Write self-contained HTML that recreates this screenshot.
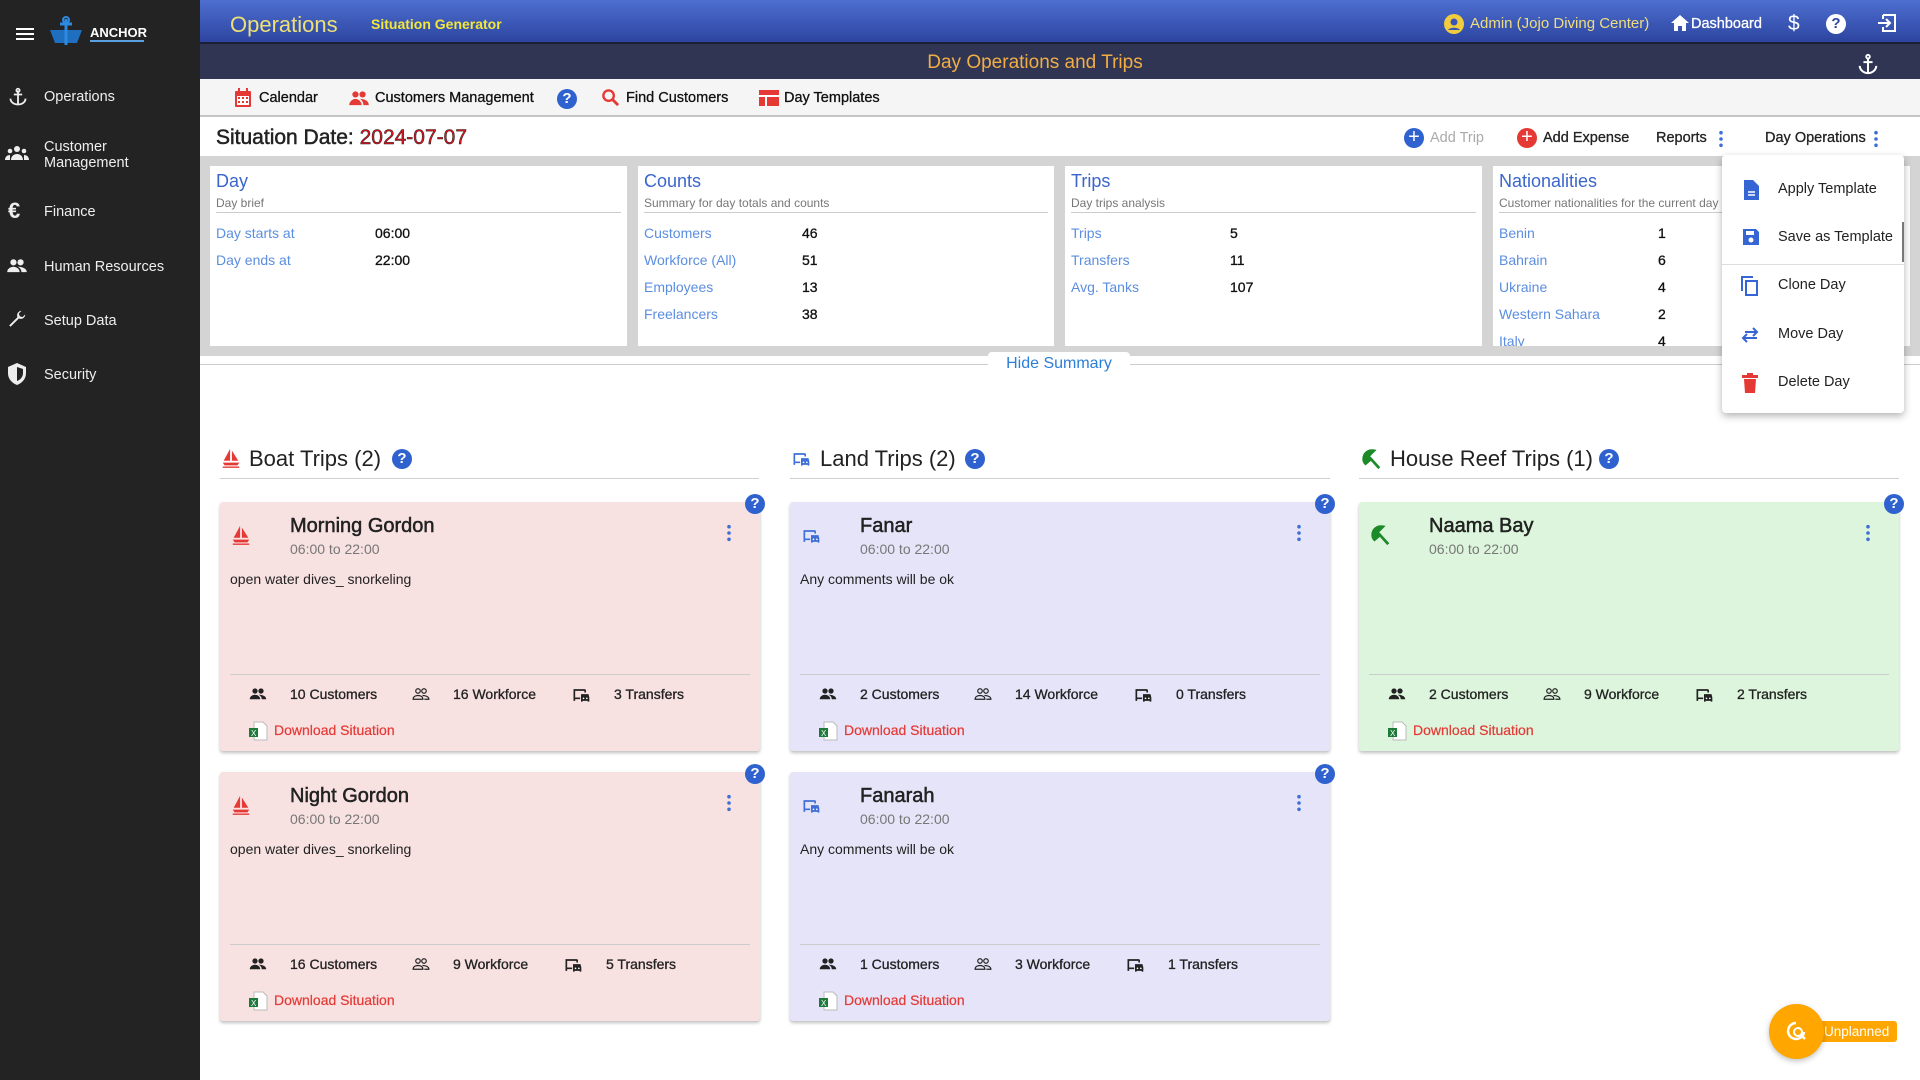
<!DOCTYPE html>
<html><head><meta charset="utf-8">
<style>
*{box-sizing:border-box;margin:0;padding:0}
body{width:1920px;height:1080px;overflow:hidden;font-family:"Liberation Sans",Arial,sans-serif;background:#fff;position:relative;color:#222}
.a{position:absolute;white-space:nowrap}
#side{left:0;top:0;width:200px;height:1080px;background:#232323}
.si{color:#eee;font-size:14.5px;left:44px}
#top{left:200px;top:0;width:1720px;height:44px;background:linear-gradient(#4d6fd0,#2d45a0);border-bottom:2px solid #1a1f33}
#sub{left:200px;top:44px;width:1720px;height:35px;background:#2f3553}
#tabs{left:200px;top:79px;width:1720px;height:38px;background:#f5f5f5;border-bottom:2px solid #c4c4c4}
.tab{font-size:14.5px;color:#111;top:90px;-webkit-text-stroke:0.3px #111}
#sumbg{left:200px;top:156px;width:1720px;height:200px;background:#d4d4d4}
.card{background:#fff;top:166px;height:180px;overflow:hidden}
.ct{font-size:18px;color:#3a66cc;left:6px;top:5px}
.cs{font-size:12px;color:#777;left:6px;top:30px}
.chr{left:6px;right:6px;top:46px;height:1px;background:#ccc}
.rl{font-size:14px;color:#5b8ee0;left:6px}
.rv{font-size:14px;color:#111;-webkit-text-stroke:0.3px #111}
.sh{font-size:22px;color:#222;top:446px}
.ul{top:478px;height:1px;background:#d0d0d0}
.q{width:20px;height:20px;border-radius:50%;background:#2f62cf;color:#fff;font-weight:bold;font-size:15px;text-align:center;line-height:20px}
.tc{position:absolute;border-radius:3px;box-shadow:0 2px 3px rgba(0,0,0,.25);width:540px;height:249px}
.tc .t{position:absolute;left:70px;top:13px;font-size:20px;color:#222;-webkit-text-stroke:0.5px #222}
.tc .tm{position:absolute;left:70px;top:39px;font-size:14px;color:#777}
.tc .cm{position:absolute;left:10px;top:69px;font-size:14px;color:#222}
.tc .hr{position:absolute;left:10px;right:10px;top:172px;height:1px;background:#ccc}
.tc .st{position:absolute;top:184px;font-size:14px;color:#222;-webkit-text-stroke:0.3px #222}
.tc .dl{position:absolute;left:54px;top:220px;font-size:14px;color:#e53935;-webkit-text-stroke:0.2px #e53935}
.tc .ic{position:absolute}
.tc .qq{position:absolute;right:-5px;top:-8px}
.tc .kb{position:absolute;right:28px;top:22px}
.mi{font-size:14.5px;color:#222;left:56px}
</style></head><body>
<svg width="0" height="0" style="position:absolute">
<defs>
<symbol id="boat" viewBox="0 0 24 24"><path d="M11 2L4 15h7zM13 4v11h7z M3 17h18l-2 3H5z" fill="#e53935"/><path d="M3 22h18" stroke="#e53935" stroke-width="1.5"/></symbol>
<symbol id="bus" viewBox="0 0 24 24"><path d="M3 5h13a2 2 0 0 1 2 2v2h-2V7H5v8h6v2H5v2H3zM12 11h9l1 4v5h-2v-1h-6v1h-2v-5z" fill="#3f6fd6"/><circle cx="15" cy="16" r="1" fill="#fff"/><circle cx="19" cy="16" r="1" fill="#fff"/></symbol>
<symbol id="busk" viewBox="0 0 24 24"><path d="M3 5h13a2 2 0 0 1 2 2v2h-2V7H5v8h6v2H5v2H3zM12 11h9l1 4v5h-2v-1h-6v1h-2v-5z" fill="#222"/><circle cx="15" cy="16" r="1" fill="#fff"/><circle cx="19" cy="16" r="1" fill="#fff"/></symbol>
<symbol id="umb" viewBox="0 0 24 24"><path d="M4 12C4 6 9 2 15 3L9 9l3 3-6 5C5 16 4 14 4 12zM12 12l9 10" stroke="#1d8a2a" stroke-width="3" fill="#1d8a2a"/></symbol>
<symbol id="ppl" viewBox="0 0 24 24"><circle cx="8" cy="8" r="3.5" fill="#222"/><circle cx="16" cy="8" r="3.5" fill="#222"/><path d="M1 19c0-4 4-6 7-6s7 2 7 6zM13 13c3 0 10 1 10 6h-6c0-3-2-5-4-6z" fill="#222"/></symbol>
<symbol id="ppo" viewBox="0 0 24 24"><g fill="none" stroke="#222" stroke-width="1.6"><circle cx="8" cy="8" r="3"/><circle cx="16" cy="8" r="3"/><path d="M1.5 19c0-4 4-5 6.5-5s6.5 1 6.5 5zM14 14c3 0 8.5 1 8.5 5h-6"/></g></symbol>
<symbol id="xl" viewBox="0 0 20 20"><path d="M6 1h9l4 4v14H6z" fill="#fff" stroke="#bbb"/><rect x="1" y="7" width="9" height="9" fill="#1f7a3a"/><text x="3" y="15" font-size="8" fill="#fff" font-family="Liberation Sans">X</text></symbol>
<symbol id="kb" viewBox="0 0 6 20"><circle cx="3" cy="3" r="2" fill="#3f6fd6"/><circle cx="3" cy="10" r="2" fill="#3f6fd6"/><circle cx="3" cy="17" r="2" fill="#3f6fd6"/></symbol>
</defs></svg>

<div id="side" class="a"></div>
<div class="a" style="left:16px;top:28px;width:18px;height:2px;background:#fff;box-shadow:0 5px #fff,0 10px #fff"></div>
<svg class="a" style="left:48px;top:16px" width="36" height="34" viewBox="0 0 36 34"><path d="M2 14h32l-5 13H7z" fill="#1e6fbf"/><path d="M18 3v26M12 8h12" stroke="#2d8ae0" stroke-width="3"/><circle cx="18" cy="4" r="3" fill="none" stroke="#2d8ae0" stroke-width="2"/></svg>
<div class="a" style="left:90px;top:25px;color:#fff;font-weight:bold;font-size:13px">ANCHOR</div>
<div class="a" style="left:90px;top:40px;width:54px;height:2px;background:#5aa0e0"></div>
<svg class="a" style="left:8px;top:86px" width="20" height="22" viewBox="0 0 24 24"><path d="M12 4v17M7 9h10M3 14c0 4 4 7 9 7s9-3 9-7" fill="none" stroke="#eee" stroke-width="2.2"/><circle cx="12" cy="4" r="2" fill="none" stroke="#eee" stroke-width="2"/></svg>
<div class="a si" style="top:89px">Operations</div>
<svg class="a" style="left:5px;top:145px" width="24" height="16" viewBox="0 0 24 16"><circle cx="12" cy="4" r="3" fill="#eee"/><circle cx="5" cy="6" r="2.3" fill="#eee"/><circle cx="19" cy="6" r="2.3" fill="#eee"/><path d="M6 15c0-4 3-6 6-6s6 2 6 6zM0 15c0-3 2-5 5-5v5zM24 15c0-3-2-5-5-5v5z" fill="#eee"/></svg>
<div class="a si" style="top:139px;line-height:16px">Customer<br>Management</div>
<div class="a" style="left:8px;top:198px;color:#eee;font-size:22px;font-weight:bold">€</div>
<div class="a si" style="top:204px">Finance</div>
<svg class="a" style="left:6px;top:257px" width="22" height="16" viewBox="0 0 24 18"><circle cx="8" cy="6" r="3.5" fill="#eee"/><circle cx="16" cy="6" r="3.5" fill="#eee"/><path d="M1 17c0-4 4-6 7-6s7 2 7 6zM13 11c3 0 10 1 10 6h-6c0-3-2-5-4-6z" fill="#eee"/></svg>
<div class="a si" style="top:259px">Human Resources</div>
<svg class="a" style="left:6px;top:308px" width="22" height="22" viewBox="0 0 24 24"><path d="M21 7a5 5 0 0 1-7 4.5L5 20.5 3.5 19l9-9A5 5 0 0 1 17 3l-3 3 1 3 3 1z" fill="#eee"/></svg>
<div class="a si" style="top:313px">Setup Data</div>
<svg class="a" style="left:7px;top:362px" width="20" height="24" viewBox="0 0 20 24"><path d="M10 1l9 4v6c0 6-4 10-9 12-5-2-9-6-9-12V5z" fill="#eee"/><path d="M10 5v14c3-1 6-4 6-8V7z" fill="#232323"/></svg>
<div class="a si" style="top:367px">Security</div>

<div id="top" class="a"></div>
<div class="a" style="left:230px;top:12px;font-size:22px;color:#ece077">Operations</div>
<div class="a" style="left:371px;top:16px;font-size:14px;font-weight:bold;color:#f3e83a">Situation Generator</div>
<svg class="a" style="left:1444px;top:14px" width="20" height="20" viewBox="0 0 20 20"><circle cx="10" cy="10" r="10" fill="#f0cd3c"/><circle cx="10" cy="8" r="3.5" fill="#3a55b5"/><path d="M4 16c2-3 10-3 12 0" fill="#3a55b5"/></svg>
<div class="a" style="left:1470px;top:15px;font-size:15px;color:#efdd80">Admin (Jojo Diving Center)</div>
<svg class="a" style="left:1670px;top:14px" width="20" height="18" viewBox="0 0 20 18"><path d="M10 1L1 9h3v8h4v-5h4v5h4V9h3z" fill="#fff"/></svg>
<div class="a" style="left:1691px;top:16px;font-size:14.5px;color:#fff;-webkit-text-stroke:0.3px #fff">Dashboard</div>
<div class="a" style="left:1788px;top:12px;font-size:21px;color:#fff">$</div>
<div class="a" style="left:1826px;top:14px;width:20px;height:20px;border-radius:50%;background:#fff;color:#2d45a0;text-align:center;font-weight:bold;font-size:15px;line-height:20px">?</div>
<svg class="a" style="left:1877px;top:14px" width="20" height="18" viewBox="0 0 20 18"><path d="M6 1h12v16H6v-4M6 5V1M1 9h11M9 5l4 4-4 4" fill="none" stroke="#fff" stroke-width="2"/></svg>

<div id="sub" class="a"></div>
<div class="a" style="left:0;width:2070px;text-align:center;top:52px;font-size:19px;color:#f2ad45">Day Operations and Trips</div>
<svg class="a" style="left:1857px;top:52px" width="22" height="24" viewBox="0 0 24 24"><path d="M12 6v16M7 10h10M3 14c0 4 4 8 9 8s9-4 9-8" fill="none" stroke="#fff" stroke-width="2.2"/><circle cx="12" cy="4" r="2" fill="none" stroke="#fff" stroke-width="2"/></svg>

<div id="tabs" class="a"></div>
<svg class="a" style="left:234px;top:88px" width="18" height="20" viewBox="0 0 18 20"><rect x="1" y="3" width="16" height="16" rx="1" fill="#e53935"/><rect x="3" y="8" width="12" height="9" fill="#fff"/><g fill="#e53935"><rect x="4" y="9" width="2" height="2"/><rect x="8" y="9" width="2" height="2"/><rect x="12" y="9" width="2" height="2"/><rect x="4" y="13" width="2" height="2"/><rect x="8" y="13" width="2" height="2"/><rect x="12" y="13" width="2" height="2"/></g><rect x="4" y="0" width="2" height="4" fill="#e53935"/><rect x="12" y="0" width="2" height="4" fill="#e53935"/></svg>
<div class="a tab" style="left:259px">Calendar</div>
<svg class="a" style="left:348px;top:90px" width="22" height="16" viewBox="0 0 24 18"><circle cx="8" cy="5" r="3.5" fill="#e53935"/><circle cx="16" cy="5" r="3.5" fill="#e53935"/><path d="M1 17c0-4 4-7 7-7s7 3 7 7zM13 10c3 0 10 1 10 7h-6c0-3-2-6-4-7z" fill="#e53935"/></svg>
<div class="a tab" style="left:375px">Customers Management</div>
<div class="a q" style="left:557px;top:89px">?</div>
<svg class="a" style="left:601px;top:88px" width="19" height="19" viewBox="0 0 20 20"><circle cx="8" cy="8" r="5.5" fill="none" stroke="#e53935" stroke-width="2.5"/><path d="M12 12l6 6" stroke="#e53935" stroke-width="3"/></svg>
<div class="a tab" style="left:626px">Find Customers</div>
<svg class="a" style="left:759px;top:90px" width="20" height="16" viewBox="0 0 20 16"><rect x="0" y="0" width="20" height="16" fill="#e53935"/><rect x="0" y="5" width="20" height="2" fill="#fff"/><rect x="6" y="7" width="2" height="9" fill="#fff"/></svg>
<div class="a tab" style="left:784px">Day Templates</div>

<div class="a" style="left:216px;top:126px;font-size:21px;color:#222;-webkit-text-stroke:0.5px #222">Situation Date: <span style="color:#e0141e">2024-07-07</span></div>
<div class="a" style="left:1404px;top:128px;width:20px;height:20px;border-radius:50%;background:#2f62cf;color:#fff;text-align:center;line-height:19px;font-size:20px">+</div>
<div class="a" style="left:1430px;top:130px;font-size:14.5px;color:#aaa">Add Trip</div>
<div class="a" style="left:1517px;top:128px;width:20px;height:20px;border-radius:50%;background:#e53935;color:#fff;text-align:center;line-height:19px;font-size:20px">+</div>
<div class="a" style="left:1543px;top:130px;font-size:14.5px;color:#222;-webkit-text-stroke:0.3px #222">Add Expense</div>
<div class="a" style="left:1656px;top:130px;font-size:14.5px;color:#222;-webkit-text-stroke:0.3px #222">Reports</div>
<svg class="a" style="left:1718px;top:130px" width="6" height="18"><use href="#kb"/></svg>
<div class="a" style="left:1765px;top:130px;font-size:14.5px;color:#222;-webkit-text-stroke:0.3px #222">Day Operations</div>
<svg class="a" style="left:1873px;top:130px" width="6" height="18"><use href="#kb"/></svg>

<div id="sumbg" class="a"></div>
<div class="a card" style="left:210px;width:417px">
<div class="a ct">Day</div><div class="a cs">Day brief</div><div class="a chr"></div>
<div class="a rl" style="top:59px">Day starts at</div><div class="a rv" style="left:165px;top:59px">06:00</div>
<div class="a rl" style="top:86px">Day ends at</div><div class="a rv" style="left:165px;top:86px">22:00</div>
</div>
<div class="a card" style="left:638px;width:416px">
<div class="a ct">Counts</div><div class="a cs">Summary for day totals and counts</div><div class="a chr"></div>
<div class="a rl" style="top:59px">Customers</div><div class="a rv" style="left:164px;top:59px">46</div>
<div class="a rl" style="top:86px">Workforce (All)</div><div class="a rv" style="left:164px;top:86px">51</div>
<div class="a rl" style="top:113px">Employees</div><div class="a rv" style="left:164px;top:113px">13</div>
<div class="a rl" style="top:140px">Freelancers</div><div class="a rv" style="left:164px;top:140px">38</div>
</div>
<div class="a card" style="left:1065px;width:417px">
<div class="a ct">Trips</div><div class="a cs">Day trips analysis</div><div class="a chr"></div>
<div class="a rl" style="top:59px">Trips</div><div class="a rv" style="left:165px;top:59px">5</div>
<div class="a rl" style="top:86px">Transfers</div><div class="a rv" style="left:165px;top:86px">11</div>
<div class="a rl" style="top:113px">Avg. Tanks</div><div class="a rv" style="left:165px;top:113px">107</div>
</div>
<div class="a card" style="left:1493px;width:417px">
<div class="a ct">Nationalities</div><div class="a cs">Customer nationalities for the current day</div><div class="a chr"></div>
<div class="a rl" style="top:59px">Benin</div><div class="a rv" style="left:165px;top:59px">1</div>
<div class="a rl" style="top:86px">Bahrain</div><div class="a rv" style="left:165px;top:86px">6</div>
<div class="a rl" style="top:113px">Ukraine</div><div class="a rv" style="left:165px;top:113px">4</div>
<div class="a rl" style="top:140px">Western Sahara</div><div class="a rv" style="left:165px;top:140px">2</div>
<div class="a rl" style="top:167px">Italy</div><div class="a rv" style="left:165px;top:167px">4</div>
</div>

<div class="a" style="left:200px;top:364px;width:1720px;height:1px;background:#ccc"></div>
<div class="a" style="left:988px;top:352px;width:142px;height:24px;background:#fff;border-radius:4px;text-align:center;font-size:16px;color:#2b7fd8;line-height:24px">Hide Summary</div>

<svg class="a" style="left:220px;top:447px" width="22" height="22"><use href="#boat"/></svg>
<div class="a sh" style="left:249px">Boat Trips (2)</div>
<div class="a q" style="left:392px;top:449px">?</div>
<div class="a ul" style="left:220px;width:539px"></div>
<svg class="a" style="left:790px;top:449px" width="22" height="20"><use href="#bus"/></svg>
<div class="a sh" style="left:820px">Land Trips (2)</div>
<div class="a q" style="left:965px;top:449px">?</div>
<div class="a ul" style="left:790px;width:540px"></div>
<svg class="a" style="left:1360px;top:448px" width="22" height="22"><use href="#umb"/></svg>
<div class="a sh" style="left:1390px">House Reef Trips (1)</div>
<div class="a q" style="left:1599px;top:449px">?</div>
<div class="a ul" style="left:1359px;width:540px"></div>

<div class="tc" style="left:220px;top:502px;background:#f8e1e1">
<svg class="ic" style="left:10px;top:22px" width="22" height="22"><use href="#boat"/></svg>
<div class="t">Morning Gordon</div><div class="tm">06:00 to 22:00</div><div class="cm">open water dives_ snorkeling</div>
<svg class="kb" width="6" height="18"><use href="#kb"/></svg><div class="q qq">?</div>
<div class="hr"></div>
<svg class="ic" style="left:27px;top:183px" width="22" height="18"><use href="#ppl"/></svg><div class="st" style="left:70px">10 Customers</div>
<svg class="ic" style="left:190px;top:183px" width="22" height="18"><use href="#ppo"/></svg><div class="st" style="left:233px">16 Workforce</div>
<svg class="ic" style="left:350px;top:183px" width="22" height="20"><use href="#busk"/></svg><div class="st" style="left:394px">3 Transfers</div>
<svg class="ic" style="left:28px;top:219px" width="20" height="20"><use href="#xl"/></svg><div class="dl">Download Situation</div>
</div>
<div class="tc" style="left:220px;top:772px;background:#f8e1e1">
<svg class="ic" style="left:10px;top:22px" width="22" height="22"><use href="#boat"/></svg>
<div class="t">Night Gordon</div><div class="tm">06:00 to 22:00</div><div class="cm">open water dives_ snorkeling</div>
<svg class="kb" width="6" height="18"><use href="#kb"/></svg><div class="q qq">?</div>
<div class="hr"></div>
<svg class="ic" style="left:27px;top:183px" width="22" height="18"><use href="#ppl"/></svg><div class="st" style="left:70px">16 Customers</div>
<svg class="ic" style="left:190px;top:183px" width="22" height="18"><use href="#ppo"/></svg><div class="st" style="left:233px">9 Workforce</div>
<svg class="ic" style="left:342px;top:183px" width="22" height="20"><use href="#busk"/></svg><div class="st" style="left:386px">5 Transfers</div>
<svg class="ic" style="left:28px;top:219px" width="20" height="20"><use href="#xl"/></svg><div class="dl">Download Situation</div>
</div>
<div class="tc" style="left:790px;top:502px;background:#e6e4f8">
<svg class="ic" style="left:10px;top:24px" width="22" height="20"><use href="#bus"/></svg>
<div class="t">Fanar</div><div class="tm">06:00 to 22:00</div><div class="cm">Any comments will be ok</div>
<svg class="kb" width="6" height="18"><use href="#kb"/></svg><div class="q qq">?</div>
<div class="hr"></div>
<svg class="ic" style="left:27px;top:183px" width="22" height="18"><use href="#ppl"/></svg><div class="st" style="left:70px">2 Customers</div>
<svg class="ic" style="left:182px;top:183px" width="22" height="18"><use href="#ppo"/></svg><div class="st" style="left:225px">14 Workforce</div>
<svg class="ic" style="left:342px;top:183px" width="22" height="20"><use href="#busk"/></svg><div class="st" style="left:386px">0 Transfers</div>
<svg class="ic" style="left:28px;top:219px" width="20" height="20"><use href="#xl"/></svg><div class="dl">Download Situation</div>
</div>
<div class="tc" style="left:790px;top:772px;background:#e6e4f8">
<svg class="ic" style="left:10px;top:24px" width="22" height="20"><use href="#bus"/></svg>
<div class="t">Fanarah</div><div class="tm">06:00 to 22:00</div><div class="cm">Any comments will be ok</div>
<svg class="kb" width="6" height="18"><use href="#kb"/></svg><div class="q qq">?</div>
<div class="hr"></div>
<svg class="ic" style="left:27px;top:183px" width="22" height="18"><use href="#ppl"/></svg><div class="st" style="left:70px">1 Customers</div>
<svg class="ic" style="left:182px;top:183px" width="22" height="18"><use href="#ppo"/></svg><div class="st" style="left:225px">3 Workforce</div>
<svg class="ic" style="left:334px;top:183px" width="22" height="20"><use href="#busk"/></svg><div class="st" style="left:378px">1 Transfers</div>
<svg class="ic" style="left:28px;top:219px" width="20" height="20"><use href="#xl"/></svg><div class="dl">Download Situation</div>
</div>
<div class="tc" style="left:1359px;top:502px;background:#dcf5dc">
<svg class="ic" style="left:10px;top:22px" width="22" height="22"><use href="#umb"/></svg>
<div class="t">Naama Bay</div><div class="tm">06:00 to 22:00</div>
<svg class="kb" width="6" height="18"><use href="#kb"/></svg><div class="q qq">?</div>
<div class="hr"></div>
<svg class="ic" style="left:27px;top:183px" width="22" height="18"><use href="#ppl"/></svg><div class="st" style="left:70px">2 Customers</div>
<svg class="ic" style="left:182px;top:183px" width="22" height="18"><use href="#ppo"/></svg><div class="st" style="left:225px">9 Workforce</div>
<svg class="ic" style="left:334px;top:183px" width="22" height="20"><use href="#busk"/></svg><div class="st" style="left:378px">2 Transfers</div>
<svg class="ic" style="left:28px;top:219px" width="20" height="20"><use href="#xl"/></svg><div class="dl">Download Situation</div>
</div>

<div class="a" style="left:1722px;top:155px;width:182px;height:258px;background:#fff;border-radius:4px;box-shadow:0 3px 8px rgba(0,0,0,.3)">
<svg class="a" style="left:20px;top:24px" width="18" height="22" viewBox="0 0 18 22"><path d="M2 1h9l6 6v14H2z" fill="#3566d4"/><path d="M6 13h7M6 16h7" stroke="#fff" stroke-width="1.5"/></svg>
<div class="a mi" style="top:26px">Apply Template</div>
<svg class="a" style="left:20px;top:73px" width="18" height="18" viewBox="0 0 18 18"><path d="M1 1h13l3 3v13H1z" fill="#3566d4"/><rect x="4" y="3" width="8" height="4" fill="#fff"/><circle cx="9" cy="12" r="2.5" fill="#fff"/></svg>
<div class="a mi" style="top:74px">Save as Template</div>
<div class="a" style="left:0;top:109px;width:182px;height:1px;background:#ddd"></div>
<svg class="a" style="left:18px;top:120px" width="20" height="22" viewBox="0 0 20 22"><path d="M2 16V2h11" fill="none" stroke="#3566d4" stroke-width="2"/><rect x="6" y="6" width="11" height="14" fill="none" stroke="#3566d4" stroke-width="2"/></svg>
<div class="a mi" style="top:122px">Clone Day</div>
<svg class="a" style="left:18px;top:172px" width="20" height="16" viewBox="0 0 20 16"><path d="M3 11h14M7 7l-4 4 4 4M17 5H5M13 1l4 4-4 4" fill="none" stroke="#3566d4" stroke-width="2"/></svg>
<div class="a mi" style="top:171px">Move Day</div>
<svg class="a" style="left:20px;top:218px" width="16" height="20" viewBox="0 0 16 20"><rect x="0" y="2" width="16" height="3" fill="#e53935"/><rect x="5" y="0" width="6" height="3" fill="#e53935"/><path d="M2 6h12l-1 14H3z" fill="#e53935"/></svg>
<div class="a mi" style="top:219px">Delete Day</div>
</div>
<div class="a" style="left:1902px;top:222px;width:2px;height:40px;background:#777"></div>

<div class="a" style="left:1818px;top:1021px;width:79px;height:21px;background:#ffa600;border-radius:3px;color:#fff;font-size:13.5px;line-height:21px;padding-left:6px">Unplanned</div>
<div class="a" style="left:1769px;top:1004px;width:55px;height:55px;border-radius:50%;background:#ffa600;box-shadow:0 2px 6px rgba(0,0,0,.25)"></div>
<svg class="a" style="left:1786px;top:1021px" width="22" height="22" viewBox="0 0 22 22"><path d="M10 2a8 8 0 1 0 8 9" fill="none" stroke="#fff" stroke-width="2.5"/><circle cx="12" cy="11" r="4" fill="none" stroke="#fff" stroke-width="2"/><path d="M15 14l4 4" stroke="#fff" stroke-width="2.5"/></svg>
</body></html>
